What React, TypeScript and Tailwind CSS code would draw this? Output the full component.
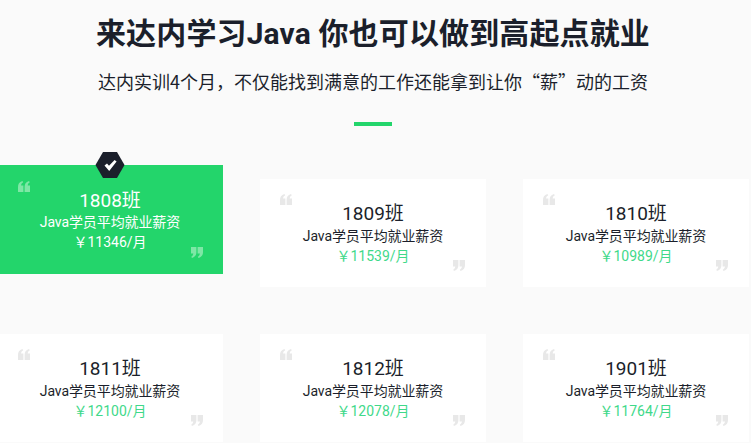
const font = { fontFamily: 'Roboto, "Noto Sans CJK SC", sans-serif' };

const cards = [
  { cls: "1808班", pay: "￥11346/月", active: true, first: true },
  { cls: "1809班", pay: "￥11539/月" },
  { cls: "1810班", pay: "￥10989/月" },
  { cls: "1811班", pay: "￥12100/月", first: true },
  { cls: "1812班", pay: "￥12078/月" },
  { cls: "1901班", pay: "￥11764/月" },
];

function Quote({ color, flip }: { color: string; flip?: boolean }) {
  return (
    <svg width="12" height="11" viewBox="0 0 12 11" fill={color} className={flip ? "rotate-180" : ""}>
      <path d="M0 11V6C0 3 1.2 1.2 4.4 0L5.2 1.3C3.8 2.1 3.2 3 3.1 4.4H5.4V11Z" />
      <path d="M6.6 11V6C6.6 3 7.8 1.2 11 0L11.8 1.3C10.4 2.1 9.8 3 9.7 4.4H12V11Z" />
    </svg>
  );
}

function Card({ cls, pay, active, first }: { cls: string; pay: string; active?: boolean; first?: boolean }) {
  const q = active ? "#7ee7a6" : "#e8e8e8";
  return (
    <div className={`relative flex flex-col items-center ${active ? "pt-[22px] bg-[#23d56b] text-white -translate-y-[14px] h-[109px]" : "pt-[21px] bg-white text-[#1b1f2b] h-[108px]"}`}>
      <div className={`absolute flex ${first ? "left-[21px]" : "left-[20px]"} ${active ? "top-[16px]" : "top-[15px]"}`}><Quote color={q} /></div>
      <div className={`absolute bottom-[16px] flex ${first ? "right-[20px]" : "right-[21px]"}`}><Quote color={q} flip /></div>
      {active && (
        <div className="absolute left-1/2 top-[-13px] -translate-x-1/2 flex">
          <svg width="30" height="26" viewBox="0 0 30 26">
            <path d="M8 0H22L29.5 13L22 26H8L.5 13Z" fill="#1b1f2b" />
            <path d="M9.5 13.6L12 11.4L14 13.8L19.6 8L21.6 9.6L14.2 19Z" fill="#fff" />
          </svg>
        </div>
      )}
      <div className="text-[19px] leading-[28px]">{cls}</div>
      <div className={`text-[14px] leading-[18px] tracking-[-0.1px] ${active ? "mt-[-2px]" : "mt-[-1px]"}`}>Java学员平均就业薪资</div>
      <div className={`text-[14px] leading-[20px] mt-[1px] ${active ? "text-white" : "text-[#3fd98a]"}`}>{pay}</div>
    </div>
  );
}

export default function App() {
  return (
    <div className="w-[751px] h-[443px] overflow-hidden bg-[#fafafa]" style={font}>
      <div className="w-[746px] flex flex-col items-center">
        <h1 className="mt-[12px] text-[30px] leading-[44px] font-bold text-[#1b1f2b] whitespace-nowrap tracking-[0.14px]">来达内学习Java 你也可以做到高起点就业</h1>
        <p className="mt-[7px] text-[18px] leading-[36px] text-[#1b1f2b] whitespace-nowrap [text-spacing-trim:space-all] [font-family:'Noto_Sans_CJK_SC',sans-serif]">达内实训4个月，不仅能找到满意的工作还能拿到让你“薪”动的工资</p>
        <div className="mt-[23px] w-[38px] h-[4px] shrink-0 bg-[#23d56b]" />
        <div className="mt-[53px] shrink-0 w-[752px] grid grid-cols-[226px_226px_226px] gap-x-[37px] gap-y-[46px]">
          {cards.map((c) => <Card key={c.cls} {...c} />)}
        </div>
      </div>
    </div>
  );
}
